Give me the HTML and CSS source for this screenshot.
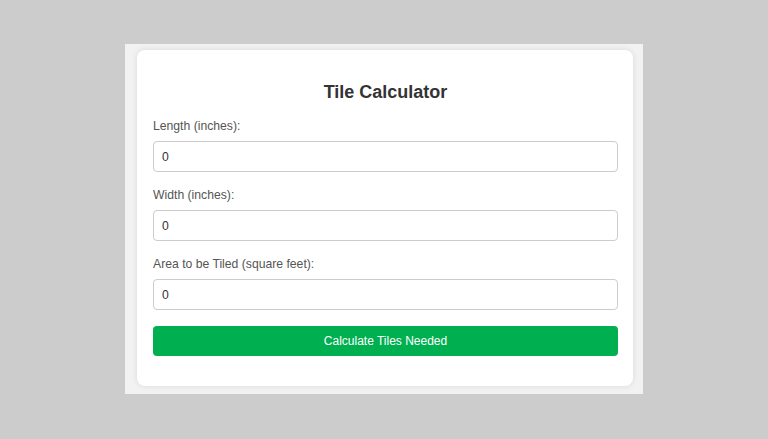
FILE: index.html
```html
<!DOCTYPE html>
<html lang="en">
  <head>
    <meta charset="UTF-8" />
    <title>Tile Calculator</title>
    <link rel="stylesheet" href="styles.css">
  </head>
  <body>
    <div class="page">
      <div class="calculator">
        <h1 class="calculator__title">Tile Calculator</h1>

        <label class="calculator__label" for="length">Length (inches):</label>
        <input class="calculator__input" id="length" type="number" value="0">

        <label class="calculator__label" for="width">Width (inches):</label>
        <input class="calculator__input" id="width" type="number" value="0">

        <label class="calculator__label" for="area">Area to be Tiled (square feet):</label>
        <input class="calculator__input" id="area" type="number" value="0">

        <button class="calculator__button">Calculate Tiles Needed</button>
      </div>
    </div>
  </body>
</html>
```

FILE: styles.css
```css
body {
  margin: 0;
  background-color: #cccccc;
  font-family: "Liberation Sans", Arial, sans-serif;
}

.page {
  width: 518px;
  height: 350px;
  box-sizing: border-box;
  margin: 44px 0 0 125px;
  padding: 6px 10px 8px 12px;
  background-color: #f2f2f2;
}

.calculator {
  display: flex;
  flex-direction: column;
  width: 496px;
  height: 336px;
  box-sizing: border-box;
  padding: 30px 15px 0 16px;
  background-color: #ffffff;
  border-radius: 8px;
  box-shadow: 0 0 6px rgba(0, 0, 0, 0.1);
}

.calculator__title {
  margin: 0 0 15px;
  font-size: 18px;
  line-height: 24px;
  text-align: center;
  color: #333333;
}

.calculator__label {
  font-size: 12.2px;
  line-height: 14px;
  color: #555555;
  margin-bottom: 8px;
}

.calculator__input {
  height: 31px;
  box-sizing: border-box;
  padding: 0 8px;
  margin: 0 0 16px;
  border: 1px solid #cccccc;
  border-radius: 4px;
  font-family: inherit;
  font-size: 12.2px;
  color: #333333;
}

.calculator__input::-webkit-inner-spin-button {
  display: none;
}

.calculator__button {
  height: 30px;
  border: none;
  border-radius: 4px;
  background-color: #00b050;
  color: #ffffff;
  font-family: inherit;
  font-size: 12px;
}
```
